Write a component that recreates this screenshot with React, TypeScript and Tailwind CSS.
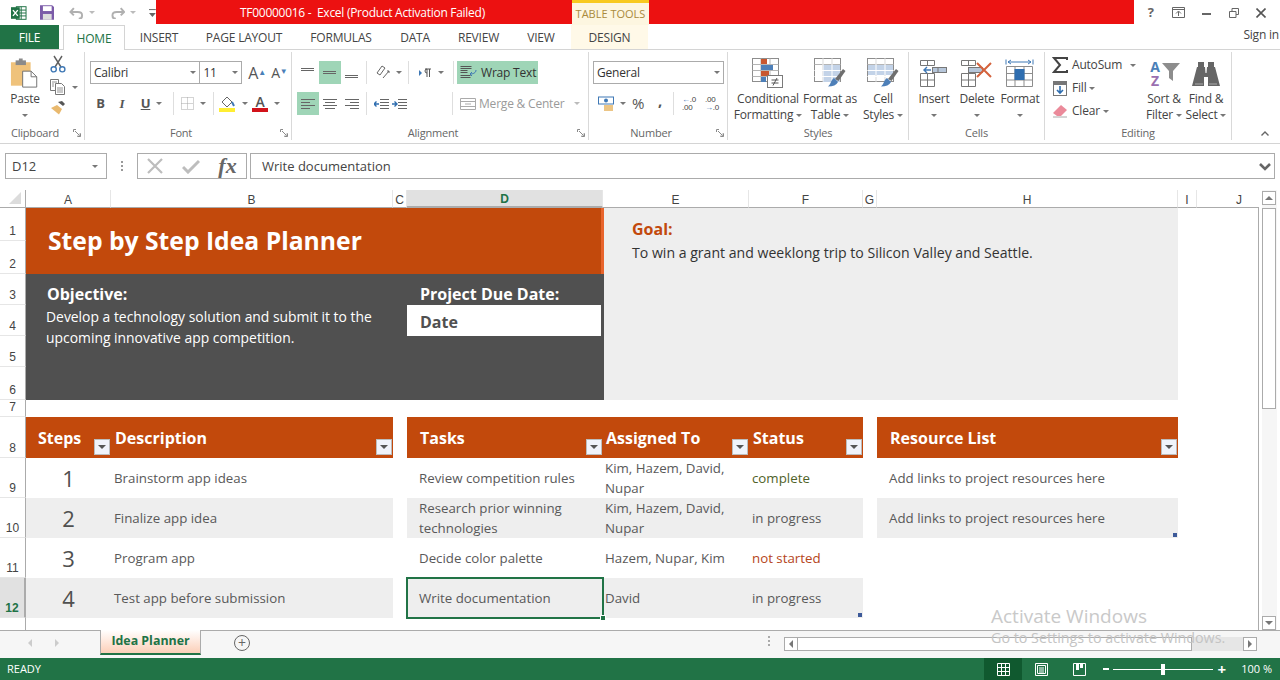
import type { ReactNode } from "react";
import clsx from "clsx";

const orange = "bg-[#c2490c]";

const Caret = ({ className }: { className?: string }) => (
  <span className={clsx("inline-block h-0 w-0 border-x-[3px] border-t-[3px] border-x-transparent border-t-[#777]", className)} />
);

const Launcher = () => (
  <svg width="8" height="8" viewBox="0 0 8 8" fill="none" stroke="#8a8a8a">
    <path d="M.5 3V.5H3M7.500 5v2.500H5M2 2l4.500 4.500M4 7.200h3.200V4" />
  </svg>
);

const Group = ({ width, label, launcher, children }: { width: string; label: string; launcher?: boolean; children: ReactNode }) => (
  <div className={clsx("flex h-full shrink-0 flex-col border-r border-[#d9d9d9]", width)}>
    <div className="min-h-0 flex-1">{children}</div>
    <div className="flex h-[14px] items-center text-[11px] text-[#666]">
      <span className="flex-1 text-center">{label}</span>
      {launcher && (
        <span className="flex w-[14px] justify-center">
          <Launcher />
        </span>
      )}
    </div>
  </div>
);

const Sep = () => <span className="mx-[3px] h-[23px] w-px shrink-0 bg-[#dedede]" />;

const Tool = ({ width, active, children }: { width: string; active?: boolean; children: ReactNode }) => (
  <span className={clsx("flex h-[23px] shrink-0 items-center justify-center gap-[6px]", width, active && "bg-[#9fd5b7]")}>{children}</span>
);

const BigTool = ({ width, icon, lines, caret }: { width: string; icon: ReactNode; lines: string[]; caret?: boolean }) => (
  <div className={clsx("flex shrink-0 flex-col items-center text-[12px] leading-[16px] text-[#444]", width)}>
    <div className="flex h-[33px] items-center">{icon}</div>
    <div className="mt-[1px] whitespace-nowrap">{lines[0]}</div>
    {lines[1] ? (
      <div className="flex items-center gap-[3px] whitespace-nowrap">
        {lines[1]}
        <Caret />
      </div>
    ) : (
      <div className="flex h-[16px] items-center">{caret && <Caret />}</div>
    )}
  </div>
);

const AlignIcon = ({ rows }: { rows: string[] }) => (
  <svg width="16" height="14" viewBox="0 0 16 14" fill="none" stroke="#666">
    {rows.map((d) => (
      <path key={d} d={d} />
    ))}
  </svg>
);

const IndentIcon = ({ arrow }: { arrow: string }) => (
  <svg width="16" height="14" viewBox="0 0 16 14" fill="none" stroke="#666">
    <path d="M6 2.500h9M6 5.500h9M6 8.500h9M6 11.500h9" />
    <path d={arrow} stroke="#2f6eb0" strokeWidth="1.400" />
  </svg>
);

const PasteIcon = () => (
  <svg width="30" height="31" viewBox="0 0 32 32">
    <rect x="1" y="4" width="21" height="25" fill="#efc27b" />
    <rect x="6" y="2" width="11" height="5" fill="#8a8a8a" />
    <rect x="9.500" y="0" width="4" height="3" fill="#8a8a8a" />
    <path d="M13.500 13.500h9l6 6v11h-15z" fill="#fff" stroke="#6e6e6e" />
    <path d="M22.500 13.500v6h6" fill="none" stroke="#6e6e6e" />
  </svg>
);

const CutIcon = () => (
  <svg width="16" height="18" viewBox="0 0 16 18" fill="none" stroke="#5f5f5f" strokeWidth="1.400">
    <path d="M4 1l7 11M12 1L5 12" />
    <circle cx="3.700" cy="14.300" r="2.600" stroke="#3f78b5" />
    <circle cx="12.300" cy="14.300" r="2.600" stroke="#3f78b5" />
  </svg>
);

const CopyIcon = () => (
  <svg width="16" height="16" viewBox="0 0 16 16" fill="#fff" stroke="#777">
    <path d="M.5.500h8v11h-8z" />
    <path d="M5.500 4.500h6l3 3v8h-9z" />
    <path d="M2 3h5M2 5h2M2 7h2M7 9h6M7 11h6M7 13h6" strokeWidth=".8" />
  </svg>
);

const BrushIcon = () => (
  <svg width="16" height="14" viewBox="0 0 16 14">
    <path d="M8 1l5 4 2-2-3-3z" fill="#555" />
    <path d="M1 7l6-3 5 4-3 5.500z" fill="#e9b96e" />
  </svg>
);

const GridBase = ({ children }: { children?: ReactNode }) => (
  <>
    <rect x=".5" y=".5" width="26" height="23" fill="#fff" stroke="#8d8d8d" />
    <path d="M9 .5v23M18 .5v23M.5 6.500h26M.5 12.500h26M.5 18.500h26" stroke="#b5b5b5" />
    {children}
  </>
);

const CondIcon = () => (
  <svg width="32" height="32" viewBox="0 0 32 32" fill="none">
    <GridBase>
      <rect x="9" y="1" width="6" height="5" fill="#c8572f" />
      <rect x="9" y="7" width="12" height="5" fill="#4d7fb8" />
      <rect x="9" y="13" width="8" height="5" fill="#c8572f" />
      <rect x="9" y="19" width="5" height="5" fill="#4d7fb8" />
    </GridBase>
    <rect x="15.500" y="17.500" width="15" height="12" fill="#fff" stroke="#7a7a7a" />
    <path d="M19.500 22h7M19.500 25h7M25 20l-4 7.500" stroke="#555" />
  </svg>
);

const TableBrushIcon = ({ fill }: { fill: boolean }) => (
  <svg width="32" height="32" viewBox="0 0 32 32" fill="none">
    <GridBase>
      {fill ? (
        <rect x="9" y="7" width="17" height="17" fill="#c3d3e8" />
      ) : (
        <rect x="1" y="7" width="25" height="10" fill="#c3d3e8" />
      )}
      <path d="M9 .5v23M18 .5v23M.5 12.500h26M.5 18.500h26" stroke="#fff" />
    </GridBase>
    <path d="M21 21l8-10 2.500 2-7 10z" fill="#6e6e6e" />
    <path d="M20 20l4 4c-1.500 3-5 4.500-10 4.500 3-2 3-7 6-8.500z" fill="#4d7fb8" />
  </svg>
);

const InsertIcon = () => (
  <svg width="28" height="30" viewBox="0 0 28 30" fill="none" stroke="#777">
    <path d="M.5 1.500h14v5h-14zM7.500 1.500v5M.5 14.500h14v13h-14zM7.500 14.500v13M.5 21h14" />
    <rect x="12.500" y="8.500" width="14" height="5" fill="#b6c6da" />
    <path d="M18 8.500v5" />
    <path d="M11 11H3.500M7 8l-3 3 3 3" stroke="#3f78b5" strokeWidth="1.400" />
  </svg>
);

const DeleteIcon = () => (
  <svg width="32" height="30" viewBox="0 0 32 30" fill="none" stroke="#777">
    <path d="M.5 1.500h14v5h-14zM7.500 1.500v5M.5 14.500h14v13h-14zM7.500 14.500v13M.5 21h14" />
    <rect x="7.500" y="8.500" width="14" height="5" fill="#b6c6da" />
    <path d="M16 4l14 14M30 4L16 18" stroke="#d4623c" strokeWidth="2" />
  </svg>
);

const FormatIcon = () => (
  <svg width="30" height="30" viewBox="0 0 30 30" fill="none" stroke="#8d8d8d">
    <path d="M1 .5v5M28 .5v5" stroke="#3f78b5" />
    <path d="M3 3h23M6 1l-3 2 3 2M23 1l3 2-3 2" stroke="#3f78b5" />
    <path d="M1.500 7.500h26v20h-26zM1.500 14.500h26M1.500 21h26M10 7.500v20M19 7.500v20" />
    <rect x="9.500" y="10" width="10" height="11" fill="#2f6eb0" stroke="none" />
  </svg>
);

const SortIcon = () => (
  <div className="flex h-[28px] items-center">
    <div className="flex w-[13px] flex-col items-center text-[14px] font-bold leading-[14px]">
      <span className="h-[14px] text-[#4a7fb8]">A</span>
      <span className="h-[14px] text-[#9a6fb0]">Z</span>
    </div>
    <svg className="mb-[4px]" width="18" height="18" viewBox="0 0 18 18">
      <path d="M0 0h18l-7 8v10l-4-3V8z" fill="#8d8d8d" />
    </svg>
  </div>
);

const FindIcon = () => (
  <svg width="28" height="24" viewBox="0 0 28 24" fill="#666">
    <rect x="6" y="0" width="6" height="6" />
    <rect x="16" y="0" width="6" height="6" />
    <path d="M5 5h8l.5 6h1l.5-6h8l5 19H16v-9h-4v9H0z" />
    <path d="M3 22h8M17 22h8" stroke="#aaa" />
  </svg>
);

const FilterButton = () => (
  <span className="absolute bottom-[3px] right-[1px] flex h-[16px] w-[16px] items-center justify-center border border-[#bcbcbc] bg-[#f0f3fa]">
    <span className="h-0 w-0 border-x-[4px] border-t-[4px] border-x-transparent border-t-[#555]" />
  </span>
);

const Corner = () => <span className="absolute bottom-[1px] right-[1px] h-[4px] w-[4px] bg-[#3d5a99]" />;

const colHeaders = [
  { label: "A", cls: "col-start-2" },
  { label: "B", cls: "col-start-3" },
  { label: "C", cls: "col-start-4" },
  { label: "D", cls: "col-start-5 bg-[#e1e1e1] border-b-2 border-b-[#217346] font-semibold text-[#217346]" },
  { label: "E", cls: "col-start-6" },
  { label: "F", cls: "col-start-7" },
  { label: "G", cls: "col-start-8" },
  { label: "H", cls: "col-start-9" },
  { label: "I", cls: "col-start-10" },
  { label: "J", cls: "col-start-11 pl-[22px] border-r-0" },
];

const rowHeaders = [
  { label: "1", cls: "row-start-2" },
  { label: "2", cls: "row-start-3" },
  { label: "3", cls: "row-start-4" },
  { label: "4", cls: "row-start-5" },
  { label: "5", cls: "row-start-6" },
  { label: "6", cls: "row-start-7" },
  { label: "7", cls: "row-start-8" },
  { label: "8", cls: "row-start-9" },
  { label: "9", cls: "row-start-10" },
  { label: "10", cls: "row-start-11" },
  { label: "11", cls: "row-start-12" },
  { label: "12", cls: "row-start-13 bg-[#e1e1e1] border-r-2 border-r-[#217346] font-semibold text-[#217346]" },
];

const headers = [
  { label: "Steps", cls: "col-start-2 pl-[12px]" },
  { label: "Description", cls: "col-start-3 pl-[4px]" },
  { label: "Tasks", cls: "col-start-5 pl-[13px]" },
  { label: "Assigned To", cls: "col-start-6 pl-[3px]" },
  { label: "Status", cls: "col-start-7 pl-[4px]" },
  { label: "Resource List", cls: "col-start-9 pl-[13px]" },
];

const steps = [
  { row: "row-start-10", n: "1", desc: "Brainstorm app ideas", task: ["Review competition rules"], who: ["Kim, Hazem, David,", "Nupar"], status: "complete", color: "text-[#4f6228]", link: true },
  { row: "row-start-11 bg-[#eeeeee]", n: "2", desc: "Finalize app idea", task: ["Research prior winning", "technologies"], who: ["Kim, Hazem, David,", "Nupar"], status: "in progress", color: "", link: true, corner: true },
  { row: "row-start-12", n: "3", desc: "Program app", task: ["Decide color palette"], who: ["Hazem, Nupar, Kim"], status: "not started", color: "text-[#b5451b]" },
  { row: "row-start-13 bg-[#eeeeee]", n: "4", desc: "Test app before submission", task: ["Write documentation"], who: ["David"], status: "in progress", color: "", selected: true },
];

const Lines = ({ lines }: { lines: string[] }) => (
  <div>
    {lines.map((l) => (
      <div key={l} className="whitespace-nowrap">{l}</div>
    ))}
  </div>
);

const Sheet = () => (
  <div className="grid h-[440px] shrink-0 grid-cols-[26px_85px_282px_14px_196px_146px_114px_14px_301px_19px_62px] grid-rows-[18px_33px_33px_31px_31px_31px_33px_17px_41px_40px_40px_40px_40px_12px] font-['Open_Sans',sans-serif] text-[13.3px] leading-[20px] text-[#595959]">
    {/* column headers */}
    <div className="relative col-start-1 row-start-1 border-b border-r border-[#ababab]">
      <span className="absolute bottom-[3px] right-[4px] h-0 w-0 border-b-[12px] border-l-[12px] border-b-[#dcdcdc] border-l-transparent" />
    </div>
    {colHeaders.map((c) => (
      <div key={c.label} className={clsx("row-start-1 flex items-center justify-center border-b border-r border-b-[#ababab] border-r-[#e6e6e6] pt-[2px] font-['Liberation_Sans',sans-serif] text-[12px] leading-[14px] text-[#444]", c.cls)}>
        {c.label}
      </div>
    ))}

    {/* row headers */}
    {rowHeaders.map((r) => (
      <div key={r.label} className={clsx("col-start-1 flex items-end justify-center border-b border-r border-b-[#e6e6e6] border-r-[#ababab] pb-[2px] font-['Liberation_Sans',sans-serif] text-[12px] leading-[14px] text-[#444]", r.cls)}>
        {r.label}
      </div>
    ))}
    <div className="col-start-1 row-start-14 border-r border-[#ababab]" />
    <div className="col-start-11 row-span-13 row-start-2 border-r border-[#ababab]" />

    {/* banner */}
    <div className={clsx("relative z-10 col-span-4 col-start-2 row-span-2 row-start-2 -mr-px flex items-center border-r-[3px] border-[#e8642c] pl-[22px] text-[24.7px] font-bold text-white", orange)}>
      Step by Step Idea Planner
    </div>
    <div className="col-span-3 col-start-2 row-span-4 row-start-4 bg-[#505050] pt-[10px] text-[13.9px] leading-[21px] text-white">
      <div className="pl-[21px] text-[16px] font-bold">Objective:</div>
      <div className="mt-[1px] pl-[20px]">Develop a technology solution and submit it to the</div>
      <div className="pl-[20px]">upcoming innovative app competition.</div>
    </div>
    <div className="relative z-10 col-start-5 row-span-4 row-start-4 -mr-px bg-[#505050] pt-[9px] text-white">
      <div className="pl-[13px] text-[16px] font-bold leading-[22px]">Project Due Date:</div>
      <div className="mr-[3px] h-[31px] bg-white pl-[13px] pt-[2px] text-[16px] font-bold leading-[31px] text-[#505050]">Date</div>
    </div>
    <div className="col-span-4 col-start-6 row-span-6 row-start-2 bg-[#eeeeee] pl-[29px] pt-[10px] text-[14.1px] leading-[22px] text-[#333]">
      <div className="text-[16px] font-bold text-[#c2490c]">Goal:</div>
      <div className="mt-[2px]">To win a grant and weeklong trip to Silicon Valley and Seattle.</div>
    </div>

    {/* table headers */}
    {headers.map((h) => (
      <div key={h.label} className={clsx("relative row-start-9 flex items-center text-[16px] font-bold text-white", orange, h.cls)}>
        {h.label}
        <FilterButton />
      </div>
    ))}

    {/* table rows */}
    {steps.map((s) => {
      const base = clsx("flex items-center", s.row);
      return (
        <div key={s.n} className="contents">
          <div className={clsx(base, "col-start-2 justify-center text-[22px] font-normal text-[#505050]")}>{s.n}</div>
          <div className={clsx(base, "col-start-3 pl-[3px]")}>{s.desc}</div>
          <div className={clsx(base, "relative col-start-5 pl-[12px]")}>
            <Lines lines={s.task} />
            {s.selected && (
              <>
                <span className="absolute -inset-x-px -inset-y-px border-2 border-[#217346]" />
                <span className="absolute -bottom-[3px] -right-[3px] h-[6px] w-[6px] border border-white bg-[#217346]" />
              </>
            )}
          </div>
          <div className={clsx(base, "col-start-6 pl-[2px]")}>
            <Lines lines={s.who} />
          </div>
          <div className={clsx(base, "relative col-start-7 pl-[3px]", s.color)}>
            {s.status}
            {s.selected && <Corner />}
          </div>
          {s.link && (
            <div className={clsx(base, "relative col-start-9 pl-[12px]")}>
              Add links to project resources here
              {s.corner && <Corner />}
            </div>
          )}
        </div>
      );
    })}
  </div>
);

const TitleBar = () => (
  <div className="flex h-[25px] items-center bg-white">
    <div className="flex w-[156px] shrink-0 items-center pl-[11px]">
      <svg width="16" height="16" viewBox="0 0 16 16">
        <rect x="5.500" y="1.500" width="10" height="13" fill="#fff" stroke="#217346" />
        <path d="M10.500 1.500v13M5.500 5h10M5.500 8h10M5.500 11h10" stroke="#217346" />
        <rect x="0" y="2" width="9" height="12" fill="#217346" />
        <path d="M2 5l5 6M7 5l-5 6" stroke="#fff" strokeWidth="1.400" />
      </svg>
      <svg className="ml-[13px]" width="15" height="15" viewBox="0 0 15 15">
        <path d="M0 0h12.500L15 2.500V15H0z" fill="#7b5ba8" />
        <rect x="3" y="1" width="9" height="5" fill="#fff" />
        <rect x="3" y="9" width="9" height="6" fill="#ddd" />
      </svg>
      <svg className="ml-[15px]" width="15" height="12" viewBox="0 0 15 12" fill="none" stroke="#b0b0b0" strokeWidth="2">
        <path d="M1.500 5H9c3 0 4.500 1.500 4.500 3.500S12 12 10 12M5 1L1.500 5 5 8.500" />
      </svg>
      <Caret className="ml-[5px] opacity-50" />
      <svg className="ml-[16px]" width="15" height="12" viewBox="0 0 15 12" fill="none" stroke="#b0b0b0" strokeWidth="2">
        <path d="M13.500 5H6C3 5 1.500 6.500 1.500 8.500S3 12 5 12M10 1l3.500 4L10 8.500" />
      </svg>
      <Caret className="ml-[5px] opacity-50" />
      <svg className="ml-[13px]" width="7" height="8" viewBox="0 0 7 8" fill="#666">
        <rect x="0" y="0" width="7" height="1" />
        <path d="M0 4h7L3.500 8z" />
      </svg>
    </div>
    <div className="flex h-[24px] w-[978px] shrink-0 self-start bg-[#ec1111] text-[12px] leading-[26px] text-white">
      <span className="w-[416px] whitespace-pre pl-[84px] tracking-[-0.28px]">TF00000016 -  Excel (Product Activation Failed)</span>
      <span className="h-[25px] w-[77px] border-t-[3px] border-[#f8c91f] bg-[#fdf6e0] text-center text-[11px] leading-[21px] text-[#a98a3c]">TABLE TOOLS</span>
    </div>
    <div className="flex flex-1 items-center justify-around px-[5px] text-[#666]">
      <span className="text-[13px] font-bold">?</span>
      <svg width="13" height="11" viewBox="0 0 13 11" fill="none" stroke="#666">
        <path d="M.5.500h12v10H.5zM.5 2.500h12M6.500 9V4.500M4 6.500L6.500 4 9 6.500" />
      </svg>
      <span className="mt-[3px] h-[2px] w-[9px] bg-[#666]" />
      <svg width="10" height="10" viewBox="0 0 10 10" fill="none" stroke="#666">
        <path d="M.5 3.500h6.500v6H.5zM3 3.500V.5h6.500v6H7" />
      </svg>
      <svg width="10" height="10" viewBox="0 0 10 10" fill="none" stroke="#555" strokeWidth="1.600">
        <path d="M.5.500l9 9M9.500.500l-9 9" />
      </svg>
    </div>
  </div>
);

const tabs = [
  { label: "INSERT", cls: "w-[66px]" },
  { label: "PAGE LAYOUT", cls: "w-[104px]" },
  { label: "FORMULAS", cls: "w-[90px]" },
  { label: "DATA", cls: "w-[58px]" },
  { label: "REVIEW", cls: "w-[69px]" },
  { label: "VIEW", cls: "w-[56px]" },
];

const TabBar = () => (
  <div className="flex h-[25px] items-stretch border-b border-[#d4d4d4] text-[12px] leading-[25px] tracking-[-0.2px] text-[#444]">
    <div className="w-[59px] bg-[#217346] text-center text-white">FILE</div>
    <div className="relative z-10 ml-[4px] h-[25px] w-[62px] border-x border-t border-[#d4d4d4] bg-white text-center text-[#217346]">HOME</div>
    <div className="ml-[1px] flex">
      {tabs.map((t) => (
        <div key={t.label} className={clsx("text-center", t.cls)}>{t.label}</div>
      ))}
    </div>
    <div className="ml-[2px] w-[77px] bg-[#fff9e8] text-center">DESIGN</div>
    <div className="flex-1 pr-[1px] text-right leading-[19px]">Sign in</div>
  </div>
);

const Ribbon = () => (
  <div className="relative flex h-[94px] border-b border-[#d4d4d4] pb-[3px] pt-[2px] text-[12px] tracking-[-0.2px] text-[#444]">
    <Group width="w-[85px]" label="Clipboard" launcher>
      <div className="flex">
        <div className="pt-[5px]"><BigTool width="w-[50px]" icon={<PasteIcon />} lines={["Paste"]} caret /></div>
        <div className="mt-[3px] flex flex-col gap-[6px]">
          <CutIcon />
          <span className="flex items-center gap-[6px]"><CopyIcon /><Caret /></span>
          <BrushIcon />
        </div>
      </div>
    </Group>
    <Group width="w-[207px]" label="Font" launcher>
      <div className="mt-[9px] flex h-[23px] items-center pl-[5px]">
        <span className="flex h-[23px] w-[111px] items-center justify-between border border-[#ababab] px-[3px] text-[#333]">Calibri<Caret /></span>
        <span className="-ml-px flex h-[23px] w-[43px] items-center justify-between border border-[#ababab] px-[3px] text-[#333]">11<Caret /></span>
        <span className="ml-[6px] w-[23px] text-[16px] leading-none text-[#555]">A<sup className="text-[8px] text-[#4a7fb8]">▲</sup></span>
        <span className="w-[20px] text-[14px] leading-none text-[#555]">A<sup className="text-[8px] text-[#4a7fb8]">▼</sup></span>
      </div>
      <div className="mt-[8px] flex items-center pl-[5px] text-[13px] text-[#555]">
        <Tool width="w-[21px]"><b>B</b></Tool>
        <Tool width="w-[22px]"><i className="font-['Liberation_Serif',serif] font-bold">I</i></Tool>
        <Tool width="w-[37px]"><b className="underline">U</b><Caret /></Tool>
        <Sep />
        <Tool width="w-[33px]">
          <svg width="13" height="13" viewBox="0 0 13 13" fill="none" stroke="#a8a8a8" strokeDasharray="1 1"><path d="M.5.500h12v12H.5zM6.500.500v12M.5 6.500h12" /></svg>
          <Caret />
        </Tool>
        <Sep />
        <Tool width="w-[33px]">
          <svg width="17" height="17" viewBox="0 0 17 17" fill="none">
            <path d="M3 7l5-5 5 5-5 5z" fill="#fff" stroke="#666" />
            <path d="M13 7l2 4" stroke="#3f78b5" strokeWidth="2" />
            <rect x="0" y="13" width="16" height="4" fill="#ffee33" />
          </svg>
          <Caret />
        </Tool>
        <Tool width="w-[32px]">
          <span className="relative flex h-[17px] w-[16px] justify-center text-[14px] font-semibold leading-[13px] text-[#555]">
            A
            <span className="absolute bottom-0 left-0 h-[4px] w-[16px] bg-[#d2121a]" />
          </span>
          <Caret />
        </Tool>
      </div>
    </Group>
    <Group width="w-[297px]" label="Alignment" launcher>
      <div className="mt-[9px] flex items-center pl-[5px]">
        <Tool width="w-[22px]"><AlignIcon rows={["M1 2.500h13M1 4.500h13"]} /></Tool>
        <Tool width="w-[22px]" active><AlignIcon rows={["M1 5.500h13M1 7.500h13"]} /></Tool>
        <Tool width="w-[22px]"><AlignIcon rows={["M1 9.500h13M1 11.500h13"]} /></Tool>
        <Sep />
        <Tool width="w-[35px]">
          <svg width="16" height="15" viewBox="0 0 16 15" fill="none" stroke="#666"><path d="M3 8l5-7 3 2-5 7zM9 13l6-7M13 6h2v2" /></svg>
          <Caret />
        </Tool>
        <Sep />
        <Tool width="w-[38px]">
          <svg width="13" height="10" viewBox="0 0 13 10"><path d="M0 2l3 3-3 3z" fill="#3f78b5" /><path d="M6 1h6M8 1v8M10.500 1v8M8 1a2 2 0 0 0 0 4" stroke="#555" fill="none" /></svg>
          <Caret />
        </Tool>
        <Sep />
        <span className="flex h-[23px] w-[81px] items-center gap-[4px] whitespace-nowrap bg-[#9fd5b7] pl-[3px] text-[#333]">
          <svg width="17" height="15" viewBox="0 0 17 15" fill="none" stroke="#555"><path d="M.5 1.500h11M.5 3.500h11M.5 5.500h7M.5 7.500h7M.5 10.500h10M.5 12.500h10" /><path d="M16 5c0 3-3 4-6 4M12 7l-2 2 2 2" stroke="#3f78b5" /></svg>
          Wrap Text
        </span>
      </div>
      <div className="mt-[8px] flex items-center pl-[5px]">
        <Tool width="w-[22px]" active><AlignIcon rows={["M1 2.500h14M1 5.500h9M1 8.500h14M1 11.500h9"]} /></Tool>
        <Tool width="w-[22px]"><AlignIcon rows={["M1 2.500h14M3 5.500h10M1 8.500h14M3 11.500h10"]} /></Tool>
        <Tool width="w-[22px]"><AlignIcon rows={["M1 2.500h14M6 5.500h9M1 8.500h14M6 11.500h9"]} /></Tool>
        <Sep />
        <span className="ml-[4px] flex gap-[2px]">
          <IndentIcon arrow="M5 7H0M2.500 4.500L0 7l2.500 2.500" />
          <IndentIcon arrow="M0 7h5M2.500 4.500L5 7 2.500 9.500" />
        </span>
        <span className="w-[41px]" />
        <Sep />
        <span className="flex h-[23px] items-center gap-[3px] whitespace-nowrap pl-[4px] text-[#9a9a9a]">
          <svg width="16" height="14" viewBox="0 0 16 14" fill="none" stroke="#aaa"><path d="M.5 1.500h15v11H.5zM.5 4.500h15M.5 9.500h15M5 7H11" /></svg>
          Merge &amp; Center
          <Caret className="ml-[7px] opacity-50" />
        </span>
      </div>
    </Group>
    <Group width="w-[139px]" label="Number" launcher>
      <div className="mt-[9px] pl-[4px]">
        <span className="flex h-[23px] w-[131px] items-center justify-between border border-[#ababab] px-[3px] text-[#333]">General<Caret /></span>
      </div>
      <div className="mt-[8px] flex items-center pl-[6px]">
        <Tool width="w-[33px]">
          <svg width="16" height="16" viewBox="0 0 16 16"><rect x=".5" y="1" width="15" height="7" fill="#fff" stroke="#3f78b5" /><circle cx="8" cy="4.500" r="2" fill="#3f78b5" /><path d="M6 10h9M6 12h9M6 14h9" stroke="#e6b35e" strokeWidth="1.400" /></svg>
          <Caret />
        </Tool>
        <span className="ml-[2px] w-[16px] text-center text-[15px] text-[#555]">%</span>
        <span className="mb-[6px] ml-[4px] w-[20px] text-center text-[15px] font-bold leading-none text-[#555]">,</span>
        <Sep />
        <span className="flex w-[24px] justify-center font-['Liberation_Sans',sans-serif] text-[8px] leading-[8px] text-[#444]"><span><span className="text-[#3f78b5]">←</span>.0<br />.00</span></span>
        <span className="flex w-[22px] justify-center font-['Liberation_Sans',sans-serif] text-[8px] leading-[8px] text-[#444]"><span>.00<br /><span className="text-[#3f78b5]">→</span>.0</span></span>
      </div>
    </Group>
    <Group width="w-[181px]" label="Styles">
      <div className="flex pl-[9px] pt-[5px]">
        <BigTool width="w-[62px]" icon={<CondIcon />} lines={["Conditional", "Formatting"]} />
        <BigTool width="w-[62px]" icon={<TableBrushIcon fill />} lines={["Format as", "Table"]} />
        <BigTool width="w-[44px]" icon={<TableBrushIcon fill={false} />} lines={["Cell", "Styles"]} />
      </div>
    </Group>
    <Group width="w-[136px]" label="Cells">
      <div className="flex pl-[3px] pt-[5px]">
        <BigTool width="w-[44px]" icon={<InsertIcon />} lines={["Insert"]} caret />
        <BigTool width="w-[42px]" icon={<DeleteIcon />} lines={["Delete"]} caret />
        <BigTool width="w-[44px]" icon={<FormatIcon />} lines={["Format"]} caret />
      </div>
    </Group>
    <Group width="w-[187px]" label="Editing">
      <div className="flex pl-[7px]">
        <div className="flex w-[94px] flex-col gap-[7px] pt-[5px]">
          <span className="flex h-[16px] items-center">
            <svg className="mr-[4px]" width="16" height="16" viewBox="0 0 16 16" fill="none" stroke="#444" strokeWidth="2">
              <path d="M15 3V1H2l6 7-6 7h13v-2" />
            </svg>
            AutoSum
            <Caret className="ml-[8px]" />
          </span>
          <span className="flex h-[16px] items-center">
            <svg className="ml-[1px] mr-[5px]" width="14" height="15" viewBox="0 0 14 15"><rect x=".5" y=".5" width="13" height="14" fill="#fff" stroke="#777" /><rect x="1" y="1" width="12" height="3" fill="#777" /><path d="M7 5v7M4 9l3 3 3-3" stroke="#2f6eb0" strokeWidth="1.600" fill="none" /></svg>
            Fill
            <Caret className="ml-[3px]" />
          </span>
          <span className="flex h-[16px] items-center">
            <svg className="ml-[1px] mr-[5px]" width="14" height="13" viewBox="0 0 14 13"><path d="M8 0l6 5-6 6H4L0 8z" fill="#eb8a9a" /><path d="M0 12h14" stroke="#aaa" /></svg>
            Clear
            <Caret className="ml-[3px]" />
          </span>
        </div>
        <div className="pt-[5px]"><BigTool width="w-[36px]" icon={<SortIcon />} lines={["Sort &", "Filter"]} /></div>
        <div className="pl-[6px] pt-[5px]"><BigTool width="w-[36px]" icon={<FindIcon />} lines={["Find &", "Select"]} /></div>
      </div>
    </Group>
    <svg className="absolute bottom-[7px] right-[11px]" width="8" height="5" viewBox="0 0 8 5" fill="none" stroke="#666" strokeWidth="1.400">
      <path d="M.5 4.500L4 1l3.500 3.500" />
    </svg>
  </div>
);

const FormulaBar = () => (
  <div className="flex h-[46px] items-center pb-[3px] pl-[5px] pr-[5px] pt-[1px] font-['Open_Sans',sans-serif] text-[13px] text-[#444]">
    <div className="flex h-[26px] w-[102px] items-center justify-between border border-[#ababab] pl-[6px] pr-[8px] pt-px">
      D12
      <Caret />
    </div>
    <div className="flex w-[30px] flex-col items-center gap-[2px]">
      <span className="h-[2px] w-[2px] bg-[#999]" />
      <span className="h-[2px] w-[2px] bg-[#999]" />
      <span className="h-[2px] w-[2px] bg-[#999]" />
    </div>
    <div className="flex h-[26px] w-[110px] items-center justify-around border border-[#ababab]">
      <svg width="16" height="16" viewBox="0 0 16 16" fill="none" stroke="#bdbdbd" strokeWidth="2.200"><path d="M1 1l14 14M15 1L1 15" /></svg>
      <svg width="18" height="15" viewBox="0 0 18 15" fill="none" stroke="#bdbdbd" strokeWidth="3"><path d="M1 8l5 5L17 2" /></svg>
      <span className="font-['Liberation_Serif',serif] text-[22px] font-semibold italic leading-none text-[#666]">fx</span>
    </div>
    <div className="ml-[3px] flex h-[26px] flex-1 items-center justify-between border border-[#ababab] pl-[11px] pr-[3px] pt-px">
      Write documentation
      <svg width="12" height="8" viewBox="0 0 12 8" fill="none" stroke="#666" strokeWidth="2.600"><path d="M1 1l5 5 5-5" /></svg>
    </div>
  </div>
);

const ScrollButton = ({ dir }: { dir: "up" | "down" | "left" | "right" }) => (
  <span className="flex h-[14px] w-[14px] shrink-0 items-center justify-center border border-[#ababab] bg-white">
    {dir === "up" && <span className="border-x-[4px] border-b-[4px] border-x-transparent border-b-[#777]" />}
    {dir === "down" && <span className="border-x-[4px] border-t-[4px] border-x-transparent border-t-[#777]" />}
    {dir === "left" && <span className="border-y-[4px] border-r-[4px] border-y-transparent border-r-[#777]" />}
    {dir === "right" && <span className="border-y-[4px] border-l-[4px] border-y-transparent border-l-[#777]" />}
  </span>
);

const SheetTabs = () => (
  <div className="relative flex h-[28px] items-start border-t border-[#ababab] bg-[#f6f6f6]">
    <div className="flex h-[24px] w-[100px] items-center justify-around pl-[16px] pr-[30px]">
      <span className="border-y-[4px] border-r-[4px] border-y-transparent border-r-[#ccc]" />
      <span className="border-y-[4px] border-l-[4px] border-y-transparent border-l-[#ccc]" />
    </div>
    <div className="-mt-px flex h-[25px] w-[101px] items-center justify-center border-x border-b-2 border-x-[#ababab] border-b-[#217346] bg-gradient-to-b from-white to-[#fbcfb8] font-['Open_Sans',sans-serif] text-[12.4px] font-bold text-[#217346]">
      Idea Planner
    </div>
    <span className="ml-[33px] mt-[4px] flex h-[16px] w-[16px] items-center justify-center rounded-full border border-[#666] text-[14px] leading-none text-[#666]">+</span>
    <span className="ml-[518px] mt-[5px] flex flex-col gap-[2px]">
      <span className="h-[2px] w-[2px] bg-[#aaa]" />
      <span className="h-[2px] w-[2px] bg-[#aaa]" />
      <span className="h-[2px] w-[2px] bg-[#aaa]" />
    </span>
    <div className="ml-[14px] mt-[6px] flex h-[14px] w-[473px] items-stretch bg-[#e6e6e6]">
      <ScrollButton dir="left" />
      <span className="w-[394px] border-y border-r border-[#ababab] bg-white" />
      <span className="flex-1" />
      <ScrollButton dir="right" />
    </div>
  </div>
);

const StatusBar = () => (
  <div className="flex h-[22px] items-center bg-[#217346] font-['Open_Sans',sans-serif] text-[11px] text-white">
    <span className="pl-[7px]">READY</span>
    <span className="flex-1" />
    <span className="flex h-[22px] w-[38px] items-center justify-center bg-[#10592f]">
      <svg width="13" height="13" viewBox="0 0 13 13" fill="none" stroke="#fff"><path d="M.5.500h12v12H.5zM4.500.500v12M8.500.500v12M.5 4.500h12M.5 8.500h12" /></svg>
    </span>
    <span className="flex w-[38px] justify-center">
      <svg width="13" height="13" viewBox="0 0 13 13" fill="none" stroke="#fff"><path d="M.5.500h12v12H.5zM2.500 2.500h8v8h-8zM4 5h5M4 7h5M4 9h5" /></svg>
    </span>
    <span className="flex w-[38px] justify-center">
      <svg width="13" height="13" viewBox="0 0 13 13" fill="none" stroke="#fff"><path d="M.5.500h12v12H.5z" /><path d="M3 0h3v7H3zM7 0h3v5H7z" fill="#fff" stroke="none" /></svg>
    </span>
    <span className="ml-[5px] h-[2px] w-[6px] bg-white" />
    <span className="relative ml-[4px] h-px w-[100px] bg-white">
      <span className="absolute -top-[5px] left-[48px] h-[11px] w-[4px] bg-white" />
    </span>
    <span className="ml-[4px] text-[15px] font-bold leading-none">+</span>
    <span className="w-[54px] pr-[8px] text-right">100 %</span>
  </div>
);

export default function App() {
  return (
    <div className="relative flex h-[680px] w-[1280px] flex-col overflow-hidden bg-white font-['Open_Sans',sans-serif]">
      <TitleBar />
      <TabBar />
      <Ribbon />
      <FormulaBar />
      <div className="relative flex h-[440px] shrink-0">
        <Sheet />
        <div className="ml-[3px] flex w-[15px] flex-col items-stretch bg-[#f6f6f6] pt-px">
          <ScrollButton dir="up" />
          <span className="mt-[3px] h-[201px] w-[14px] border border-[#ababab] bg-white" />
          <span className="flex-1" />
          <ScrollButton dir="down" />
        </div>
      </div>
      <SheetTabs />
      <StatusBar />
      <div className="pointer-events-none absolute left-[991px] top-[603px] text-[#c9c9c9]">
        <div className="text-[19px] leading-[26px]">Activate Windows</div>
        <div className="text-[14.300px] leading-[17px] text-[#c4c4c4]">Go to Settings to activate Windows.</div>
      </div>
    </div>
  );
}
